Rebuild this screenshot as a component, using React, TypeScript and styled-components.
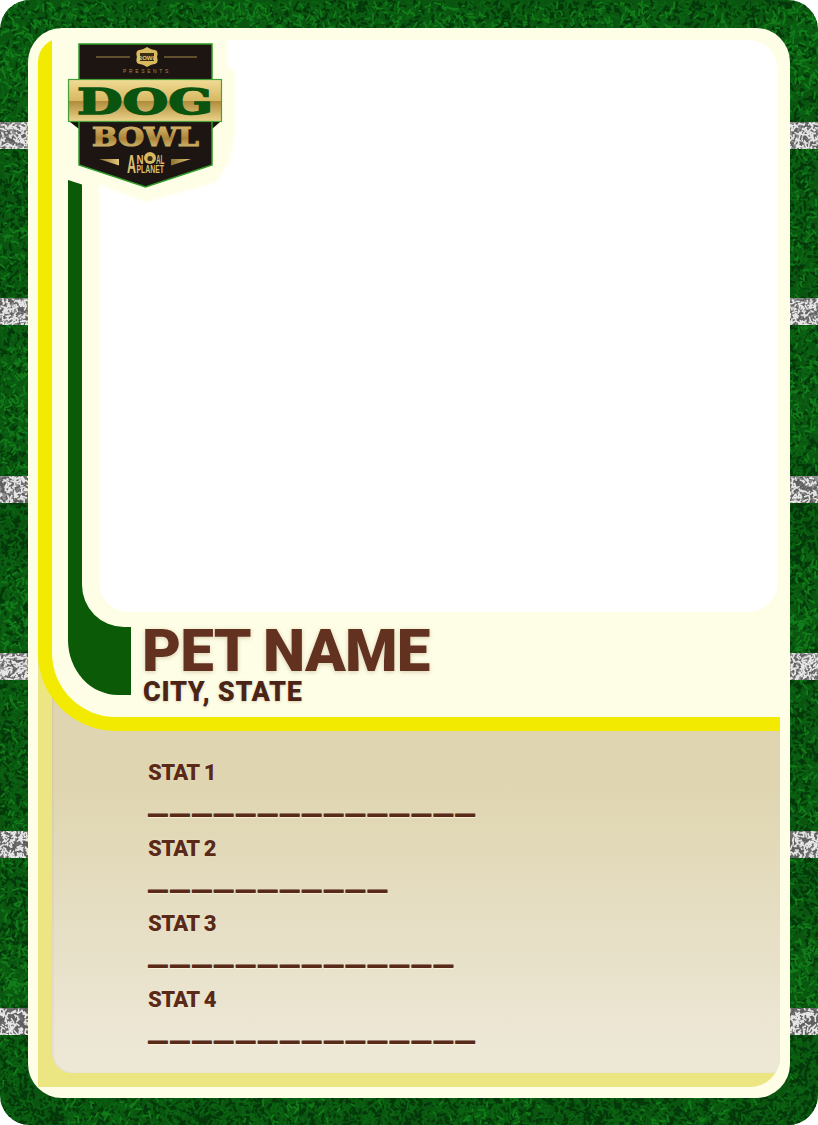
import React, { useMemo } from 'react';
import styled, { createGlobalStyle } from 'styled-components';

const palette = {
	cream: '#fefee6',
	yellow: '#f2ea00',
	paleYellow: '#ece682',
	green: '#0a5a08',
	brown: '#62311f',
	darkBrown: '#4a2416',
};

const GlobalStyle = createGlobalStyle`
	html, body {
		margin: 0;
		padding: 0;
		background: #fff;
	}
`;

const Stage = styled.div`
	width: 818px;
	height: 1125px;
	display: grid;
	border-radius: 30px;
	overflow: hidden;

	> * {
		grid-area: 1 / 1;
	}
`;

const Turf = styled.svg`
	display: block;
	width: 818px;
	height: 1125px;
`;

const Card = styled.div`
	margin: 28px 28px 27px;
	padding: 10px 10px 11px;
	background: ${palette.cream};
	border-radius: 34px;
	position: relative;
`;

const CardInner = styled.div`
	height: 1049px;
	border-top-left-radius: 24px;
	overflow: hidden;
`;

const Upper = styled.section`
	position: relative;
	z-index: 1;
	box-sizing: border-box;
	height: 693px;
	padding: 2px 2px 0 16px;
	display: grid;
	grid-template-columns: 31px 32px 1fr;
	grid-template-rows: 140px 432px 83px;
	background: ${palette.cream};
	border-left: 14px solid ${palette.yellow};
	border-bottom: 14px solid ${palette.yellow};
	border-bottom-left-radius: 78px;
`;

const Photo = styled.div`
	grid-column: 2 / 4;
	grid-row: 1 / 3;
	background: #fff;
	border-radius: 30px;
`;

const Rail = styled.svg`
	grid-column: 1 / 3;
	grid-row: 2 / 4;
	display: block;
	width: 63px;
	height: 515px;
`;

const LogoMark = styled.svg`
	position: absolute;
	left: 4px;
	top: 0;
	width: 184px;
	height: 166px;
`;

const NameBlock = styled.div`
	grid-column: 3;
	grid-row: 3;
	padding-left: 11px;
	font-family: Roboto, 'Liberation Sans', sans-serif;
`;

const PetName = styled.h1`
	margin: 10px 0 0;
	font-size: 60px;
	line-height: 58px;
	font-weight: 900;
	letter-spacing: -0.8px;
	color: ${palette.brown};
	text-shadow: 0 0 1px #fff8dc, 0 1px 4px rgba(98, 60, 30, 0.28);
`;

const Place = styled.p`
	margin: -2px 0 0 1px;
	font-size: 27px;
	line-height: 28px;
	font-weight: 900;
	letter-spacing: 0.7px;
	color: ${palette.darkBrown};
	text-shadow: 0 0 1px #fff8dc, 0 1px 3px rgba(98, 60, 30, 0.25);
`;

const Lower = styled.section`
	box-sizing: border-box;
	height: 431px;
	margin-top: -75px;
	padding: 0 0 14px 14px;
	background: ${palette.paleYellow};
	border-bottom-right-radius: 30px;
	overflow: hidden;
`;

const StatPanel = styled.div`
	height: 100%;
	box-sizing: border-box;
	padding: 97px 0 0 96px;
	background: linear-gradient(#dfd5b0 0, #dfd5b0 30%, #ede7d6 94%);
	border-radius: 0 0 6px 20px;
	box-shadow: inset 1px 0 2px rgba(90, 70, 30, 0.08);
	font-family: Roboto, 'Liberation Sans', sans-serif;
	color: #5a2a19;
`;

const Stat = styled.div`
	height: 75.7px;
`;

const StatLabel = styled.div`
	height: 40px;
	font-size: 22px;
	line-height: 40px;
	font-weight: 900;
	letter-spacing: -0.6px;
	text-shadow: 0 0 1px #fff8e4;
`;

const StatBlank = styled.div`
	height: 34px;
	font-family: 'Liberation Mono', monospace;
	font-size: 33px;
	line-height: 22px;
	font-weight: 700;
	letter-spacing: 2.15px;
	text-shadow: 0 -1px 0 #5a2a19, 0 1px 0 #5a2a19, 0 2px 1px rgba(255, 248, 228, 0.7);
`;

const stats = [
	{ label: 'STAT 1', blanks: 15 },
	{ label: 'STAT 2', blanks: 11 },
	{ label: 'STAT 3', blanks: 14 },
	{ label: 'STAT 4', blanks: 15 },
];

const barTops = [122, 298, 476, 653, 831, 1008];

const seeded = (seed: number) => () => {
	seed = (seed + 0x6d2b79f5) | 0;
	let t = Math.imul(seed ^ (seed >>> 15), 1 | seed);
	t = (t + Math.imul(t ^ (t >>> 7), 61 | t)) ^ t;
	return ((t ^ (t >>> 14)) >>> 0) / 4294967296;
};

const blade = (rand: () => number, x: number, y: number, min: number, max: number) => {
	const angle = rand() * Math.PI;
	const len = min + rand() * (max - min);
	const dx = Math.cos(angle) * len;
	const dy = Math.sin(angle) * len;
	return `M${x.toFixed(1)} ${y.toFixed(1)}l${dx.toFixed(1)} ${dy.toFixed(1)}`;
};

const useTurf = () =>
	useMemo(() => {
		const rand = seeded(41);
		const dark: string[] = [];
		const mid: string[] = [];
		const light: string[] = [];
		const specks: string[] = [];
		const shades: string[] = [];

		let placed = 0;
		while (placed < 11000) {
			const x = rand() * 818;
			const y = rand() * 1125;
			if (x > 32 && x < 786 && y > 32 && y < 1094) continue;
			placed++;
			// slow bands so the turf has mown patches, not flat noise
			const patch = Math.sin(y / 47) + Math.sin((x + y) / 31);
			const pick = rand() + patch * 0.1;
			const target = pick < 0.45 ? dark : pick < 0.84 ? mid : light;
			target.push(blade(rand, x, y, 3, 8));
		}

		barTops.forEach((top) => {
			[0, 790].forEach((left) => {
				for (let i = 0; i < 220; i++) {
					const x = left + rand() * 28;
					const y = top + rand() * 27;
					(rand() < 0.42 ? specks : shades).push(blade(rand, x, y, 2, 6));
				}
			});
		});

		return {
			dark: dark.join(''),
			mid: mid.join(''),
			light: light.join(''),
			specks: specks.join(''),
			shades: shades.join(''),
		};
	}, []);

const TurfLayer: React.FC = () => {
	const turf = useTurf();
	return (
		<Turf viewBox='0 0 818 1125'>
			<defs>
				<clipPath id='bars'>
					{barTops.map((top) => (
						<React.Fragment key={top}>
							<rect x={0} y={top} width={28} height={27} />
							<rect x={790} y={top} width={28} height={27} />
						</React.Fragment>
					))}
				</clipPath>
			</defs>
			<rect width={818} height={1125} fill='#0a5510' />
			<path d={turf.dark} stroke='#04380a' strokeWidth={2.2} fill='none' />
			<path d={turf.mid} stroke='#0b6212' strokeWidth={2} fill='none' />
			<path d={turf.light} stroke='#137c1a' strokeWidth={1.8} fill='none' />
			{barTops.map((top, index) => (
				<React.Fragment key={top}>
					<rect x={0} y={top} width={28} height={27} fill={index < 4 ? '#8f8f8f' : '#6e6e6e'} />
					<rect x={790} y={top} width={28} height={27} fill={index < 4 ? '#8f8f8f' : '#6e6e6e'} />
				</React.Fragment>
			))}
			<g clipPath='url(#bars)'>
				<path d={turf.shades} stroke='#5e5e5e' strokeWidth={1.5} fill='none' />
				<path d={turf.specks} stroke='#e6e6e6' strokeWidth={1.5} fill='none' />
			</g>
		</Turf>
	);
};

const logoFont = '"Liberation Sans", sans-serif';

const DogBowlLogo: React.FC = () => (
	<LogoMark viewBox='56 38 184 166'>
		<defs>
			<linearGradient id='plate' x1='0' y1='0' x2='0' y2='1'>
				<stop offset='0' stopColor='#f0dc96' />
				<stop offset='0.5' stopColor='#d8b862' />
				<stop offset='0.52' stopColor='#b08c3c' />
				<stop offset='1' stopColor='#ecd48c' />
			</linearGradient>
			<linearGradient id='gold' x1='0' y1='0' x2='0' y2='1'>
				<stop offset='0' stopColor='#e2c67c' />
				<stop offset='0.55' stopColor='#a98439' />
				<stop offset='1' stopColor='#e6cf8a' />
			</linearGradient>
			<linearGradient id='wedge' x1='0' y1='0' x2='1' y2='0'>
				<stop offset='0' stopColor='#8d6f2f' />
				<stop offset='1' stopColor='#e2c778' />
			</linearGradient>
			<filter id='soft'>
				<feGaussianBlur stdDeviation='1.6' />
			</filter>
		</defs>
		<path
			d='M58 40H227V66L235 72V132L230 160L217 182L146 202L98 184L58 170Z'
			fill={palette.cream}
			filter='url(#soft)'
		/>
		<path d='M70 122H79V129Z' fill='#17110d' />
		<path d='M220 122H212V129Z' fill='#17110d' />
		<path d='M79 44H212V165L145.5 187L79 165Z' fill='#1d1512' stroke='#2f9a2a' strokeWidth={1.5} />
		<path d='M96 57H130M164 57H197' stroke='#a58a48' strokeWidth={1} />
		<path
			d='M147 47C150 49 153 50 155 50C158 51 158 54 157 57C158 60 158 63 155 64C153 64 150 65 147 67C144 65 141 64 139 64C136 63 136 60 137 57C136 54 136 51 139 50C141 50 144 49 147 47Z'
			fill='#d8b95e'
		/>
		<rect x={140} y={53} width={14} height={8} fill='#3a2d16' />
		<text x={147} y={59.5} fontSize={6} fontWeight={700} textAnchor='middle' fill='#e3c86e' fontFamily={logoFont}>
			BOWL
		</text>
		<text x={147} y={73} fontSize={5} textAnchor='middle' letterSpacing={2.6} fill='#a08a50' fontFamily={logoFont}>
			PRESENTS
		</text>
		<rect x={68.5} y={79.5} width={153} height={42} fill='url(#plate)' stroke='#46a03a' strokeWidth={1.2} />
		<text
			x={77}
			y={114}
			fontSize={36}
			fontWeight={700}
			textLength={136}
			lengthAdjust='spacingAndGlyphs'
			fill='#0a5410'
			stroke='#0a5410'
			strokeWidth={1.5}
			fontFamily='"DejaVu Serif", serif'
		>
			DOG
		</text>
		<text
			x={92}
			y={146}
			fontSize={26}
			fontWeight={700}
			textLength={107}
			lengthAdjust='spacingAndGlyphs'
			fill='url(#gold)'
			stroke='url(#gold)'
			strokeWidth={1.2}
			fontFamily='"DejaVu Serif", serif'
		>
			BOWL
		</text>
		<path d='M99 159H119V165.5Z' fill='url(#wedge)' />
		<path d='M191 159H171V165.5Z' fill='url(#wedge)' />
		<text x={127} y={173} fontSize={25} fontWeight={700} textLength={9} lengthAdjust='spacingAndGlyphs' fill='#dcbf6c' fontFamily={logoFont}>
			A
		</text>
		<text x={136.5} y={164} fontSize={12.5} fontWeight={700} textLength={7} lengthAdjust='spacingAndGlyphs' fill='#dcbf6c' fontFamily={logoFont}>
			N
		</text>
		<circle cx={150} cy={158} r={6} fill='#d7b962' />
		<circle cx={150} cy={158.5} r={2.6} fill='#3a2b14' />
		<text x={156} y={164} fontSize={12.5} fontWeight={700} textLength={8.5} lengthAdjust='spacingAndGlyphs' fill='#dcbf6c' fontFamily={logoFont}>
			AL
		</text>
		<text x={136.5} y={173} fontSize={11} fontWeight={700} textLength={27.5} lengthAdjust='spacingAndGlyphs' fill='#dcbf6c' fontFamily={logoFont}>
			PLANET
		</text>
	</LogoMark>
);

const App: React.FC = () => (
	<>
		<GlobalStyle />
		<Stage>
			<TurfLayer />
			<Card>
				<CardInner>
					<Upper>
						<Photo />
						<Rail viewBox='0 0 63 515'>
							<path
								d='M0 0L14 4.5V405A42 42 0 0 0 56 447H63V515H50A50 55 0 0 1 0 460Z'
								fill={palette.green}
							/>
						</Rail>
						<NameBlock>
							<PetName>PET NAME</PetName>
							<Place>CITY, STATE</Place>
						</NameBlock>
						<DogBowlLogo />
					</Upper>
					<Lower>
						<StatPanel>
							{stats.map(({ label, blanks }) => (
								<Stat key={label}>
									<StatLabel>{label}</StatLabel>
									<StatBlank>{'_'.repeat(blanks)}</StatBlank>
								</Stat>
							))}
						</StatPanel>
					</Lower>
				</CardInner>
			</Card>
		</Stage>
	</>
);

export default App;
